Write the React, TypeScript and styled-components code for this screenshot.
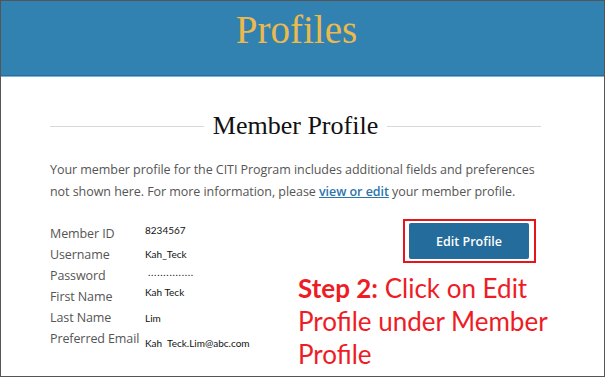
import React from "react";
import styled, { createGlobalStyle } from "styled-components";

const Global = createGlobalStyle`
  html, body { margin: 0; padding: 0; background: #fff; }
  * { box-sizing: border-box; }
`;

const Frame = styled.div`
  width: 605px;
  height: 377px;
  border: 1px solid #555;
  overflow: hidden;
  background: #fff;
  display: flex;
  flex-direction: column;
`;

const Header = styled.header`
  height: 75px;
  flex: none;
  background: #3282b1;
  border-bottom: 1px solid #2a6c9b;
  box-shadow: 0 1px 0 #7fb2d8;
  display: flex;
  justify-content: center;
  padding: 7px 12px 0 0;
`;

const Title = styled.h1`
  margin: 0;
  font-family: "Liberation Serif", "DejaVu Serif", serif;
  font-weight: 400;
  font-size: 39px;
  line-height: 44px;
  color: #ebb94c;
`;

const Content = styled.main`
  padding: 0 63px 0 49px;
  display: flex;
  flex-direction: column;
`;

const SectionHead = styled.div`
  display: flex;
  align-items: center;
  gap: 9px;
  margin-top: 34px;
  height: 32px;
`;

const Rule = styled.div`
  flex: 1;
  height: 1px;
  background: #d9d9d9;
`;

const SectionTitle = styled.h2`
  margin: 0;
  font-family: "Liberation Serif", "DejaVu Serif", serif;
  font-weight: 400;
  font-size: 26px;
  line-height: 32px;
  color: #111;
`;

const Intro = styled.p`
  margin: 17px 0 0;
  font-family: "Open Sans", sans-serif;
  font-size: 12.5px;
  letter-spacing: -0.05px;
  line-height: 22px;
  color: #555;
`;

const Link = styled.a`
  color: #2b74ad;
  font-weight: 600;
  text-decoration: underline;
`;

const Details = styled.section`
  display: flex;
  margin-top: 16px;
`;

const Fields = styled.div`
  width: 247px;
  flex: none;
  padding-top: 3px;
`;

const Field = styled.div`
  height: 21px;
  line-height: 21px;
  white-space: nowrap;
`;

const Label = styled.span`
  display: inline-block;
  width: 95px;
  font-family: "Open Sans", sans-serif;
  font-size: 12.5px;
  letter-spacing: -0.1px;
  color: #555;
`;

const Value = styled.span<{ $lift: number }>`
  font-family: "Lato", sans-serif;
  font-size: 10px;
  line-height: 10px;
  color: #111;
  vertical-align: ${(p) => p.$lift}px;
`;

const Dots = styled(Value)`
  letter-spacing: 0.7px;
  padding-left: 3px;
`;

const Side = styled.div`
  flex: 1;
  display: flex;
  flex-direction: column;
`;

const ButtonRow = styled.div`
  display: flex;
  justify-content: flex-end;
  padding-right: 5px;
`;

const Highlight = styled.div`
  border: 2px solid #e8141c;
  padding: 2px 5px 2px 4px;
`;

const EditButton = styled.button`
  width: 120px;
  height: 36px;
  border: none;
  border-radius: 2px;
  background: #236c9c;
  color: #fff;
  font-family: "Open Sans", sans-serif;
  font-weight: 600;
  font-size: 12.5px;
  cursor: pointer;
`;

const Step = styled.p`
  margin: 9px -20px 0 0;
  padding-left: 1px;
  font-family: "Lato", sans-serif;
  font-size: 26px;
  line-height: 33px;
  color: #ee1c25;
  strong { font-weight: 700; }
`;

const fields = [
  { label: "Member ID", value: "8234567", lift: 4 },
  { label: "Username", value: "Kah_Teck", lift: 1 },
  { label: "Password", value: "", lift: 4 },
  { label: "First Name", value: "Kah Teck", lift: 5 },
  { label: "Last Name", value: "Lim", lift: 0 },
  { label: "Preferred Email", value: "Kah\u00a0 Teck.Lim@abc.com", lift: -4 },
];

export default function App() {
  return (
    <>
      <Global />
      <Frame>
        <Header>
          <Title>Profiles</Title>
        </Header>
        <Content>
          <SectionHead>
            <Rule />
            <SectionTitle>Member Profile</SectionTitle>
            <Rule />
          </SectionHead>
          <Intro>
            Your member profile for the CITI Program includes additional fields and preferences not shown here. For more
            information, please <Link href="#">view or edit</Link> your member profile.
          </Intro>
          <Details>
            <Fields>
              {fields.map((f) => (
                <Field key={f.label}>
                  <Label>{f.label}</Label>
                  {f.label === "Password" ? (
                    <Dots $lift={f.lift}>...............</Dots>
                  ) : (
                    <Value $lift={f.lift}>{f.value}</Value>
                  )}
                </Field>
              ))}
            </Fields>
            <Side>
              <ButtonRow>
                <Highlight>
                  <EditButton>Edit Profile</EditButton>
                </Highlight>
              </ButtonRow>
              <Step>
                <strong>Step 2:</strong> Click on Edit Profile under Member Profile
              </Step>
            </Side>
          </Details>
        </Content>
      </Frame>
    </>
  );
}
